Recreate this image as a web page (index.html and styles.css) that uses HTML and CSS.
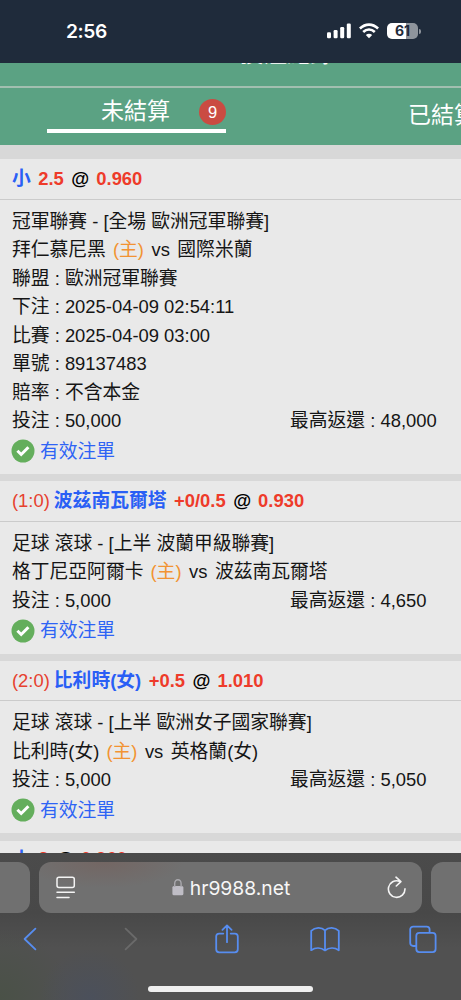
FILE: index.html
```html
<!DOCTYPE html>
<html lang="zh-Hant">
<head>
<meta charset="utf-8">
<meta name="viewport" content="width=device-width, initial-scale=1">
<title>投注紀錄</title>
<link rel="stylesheet" href="styles.css">
</head>
<body>
<div class="phone">
  <header class="status-bar">
    <span class="clock">2:56</span>
    <div class="indicators">
      <svg class="signal" width="24" height="16" viewBox="0 0 24 16" fill="#fff"><rect x="0" y="9.3" width="4" height="6" rx="1.2"/><rect x="6.6" y="7" width="4" height="8.3" rx="1.2"/><rect x="13.2" y="4" width="4" height="11.3" rx="1.2"/><rect x="19.8" y="0.5" width="4" height="14.8" rx="1.2"/></svg>
      <svg class="wifi" width="20" height="16" viewBox="0 0 20 16" fill="none" stroke="#fff" stroke-width="2.6"><path d="M.9 5.5Q5 1.6 10 1.6T19.1 5.5"/><path d="M4.2 9Q6.8 6.5 10 6.5T15.8 9"/><path d="M10 15.2 6.8 12Q10 9.4 13.2 12Z" fill="#fff" stroke="none"/></svg>
      <div class="battery"><span class="battery-body">61</span><span class="battery-cap"></span></div>
    </div>
  </header>
  <div class="title-strip"><span class="page-title">投注紀錄</span></div>
  <nav class="tabs">
    <div class="tab active"><span class="tab-name">未結算</span><span class="badge">9</span></div>
    <div class="tab next">已結算</div>
  </nav>
  <main class="bets">
    <article class="card">
      <h2 class="pick"><b class="team">小</b><b class="odd">2.5</b><b class="at">@</b><b class="odd">0.960</b></h2>
      <div class="detail">
        <p>冠軍聯賽<i> - [</i>全場<i> </i>歐洲冠軍聯賽<i>]</i></p>
        <p>拜仁慕尼黑<span class="home"><i>(</i>主<i>)</i></span><i class="vs">vs</i>國際米蘭</p>
        <p>聯盟<i> : </i>歐洲冠軍聯賽</p>
        <p>下注<i> : 2025-04-09 02:54:11</i></p>
        <p>比賽<i> : 2025-04-09 03:00</i></p>
        <p>單號<i> : 89137483</i></p>
        <p>賠率<i> : </i>不含本金</p>
        <p class="money"><span>投注<i> : 50,000</i></span><span>最高返還<i> : 48,000</i></span></p>
        <p class="state"><svg width="24" height="24" viewBox="0 0 24 24"><circle cx="12" cy="12" r="11.5" fill="#64ae5c"/><path d="m6.4 11.8 3.8 3.7 7.2-7.3" fill="none" stroke="#fff" stroke-width="3"/></svg>有效注單</p>
      </div>
    </article>
    <article class="card">
      <h2 class="pick"><span class="score">(1:0)</span><b class="team">波茲南瓦爾塔</b><b class="odd">+0/0.5</b><b class="at">@</b><b class="odd">0.930</b></h2>
      <div class="detail">
        <p>足球<i> </i>滾球<i> - [</i>上半<i> </i>波蘭甲級聯賽<i>]</i></p>
        <p>格丁尼亞阿爾卡<span class="home"><i>(</i>主<i>)</i></span><i class="vs">vs</i>波茲南瓦爾塔</p>
        <p class="money"><span>投注<i> : 5,000</i></span><span>最高返還<i> : 4,650</i></span></p>
        <p class="state"><svg width="24" height="24" viewBox="0 0 24 24"><circle cx="12" cy="12" r="11.5" fill="#64ae5c"/><path d="m6.4 11.8 3.8 3.7 7.2-7.3" fill="none" stroke="#fff" stroke-width="3"/></svg>有效注單</p>
      </div>
    </article>
    <article class="card">
      <h2 class="pick"><span class="score">(2:0)</span><b class="team">比利時<i>(</i>女<i>)</i></b><b class="odd">+0.5</b><b class="at">@</b><b class="odd">1.010</b></h2>
      <div class="detail">
        <p>足球<i> </i>滾球<i> - [</i>上半<i> </i>歐洲女子國家聯賽<i>]</i></p>
        <p>比利時<i>(</i>女<i>)</i><span class="home"><i>(</i>主<i>)</i></span><i class="vs">vs</i>英格蘭<i>(</i>女<i>)</i></p>
        <p class="money"><span>投注<i> : 5,000</i></span><span>最高返還<i> : 5,050</i></span></p>
        <p class="state"><svg width="24" height="24" viewBox="0 0 24 24"><circle cx="12" cy="12" r="11.5" fill="#64ae5c"/><path d="m6.4 11.8 3.8 3.7 7.2-7.3" fill="none" stroke="#fff" stroke-width="3"/></svg>有效注單</p>
      </div>
    </article>
    <article class="card peek">
      <h2 class="pick"><b class="team">小</b><b class="odd">3</b><b class="at">@</b><b class="odd">0.960</b></h2>
    </article>
  </main>
  <footer class="browser">
    <div class="addresses">
      <div class="address side"></div>
      <div class="address current">
        <svg class="reader" width="20" height="23" viewBox="0 0 20 23" fill="none" stroke="#f4f4f4" stroke-width="1.5" stroke-linecap="round"><rect x="1" y="1.2" width="17.3" height="10.2" rx="2"/><path d="M1 16.3h17.3M1 21.4h12"/></svg>
        <span class="host"><svg width="12" height="17" viewBox="0 0 12 17"><rect x=".4" y="7" width="11" height="9.2" rx="1.5" fill="#bfbdc5"/><path d="M2.7 8V4.5a3.2 3.8 0 0 1 6.4 0V8" fill="none" stroke="#aaa9ae" stroke-width="1.4"/></svg>hr9988.net</span>
        <svg class="reload" width="20" height="23" viewBox="0 0 20 23" fill="none" stroke="#f4f4f4" stroke-width="1.6" stroke-linecap="round" stroke-linejoin="round"><path d="M12.4 5.2A8.3 8.3 0 1 0 18 12.9M9 1.2l4.9 4.4L9.3 10"/></svg>
      </div>
      <div class="address side"></div>
    </div>
    <div class="tools">
      <svg class="back" width="14" height="30" viewBox="0 0 14 30"><path d="M12.4 4.6 1.6 15l10.8 10.4"/></svg>
      <svg class="forward" width="14" height="30" viewBox="0 0 14 30"><path d="M1.6 4.6 12.4 15 1.6 25.4"/></svg>
      <svg class="share" width="24" height="30" viewBox="0 0 24 30"><path d="M8.3 9.6H4.2a3 3 0 0 0-3 3v12.7a3 3 0 0 0 3 3h15.6a3 3 0 0 0 3-3V12.6a3 3 0 0 0-3-3h-4.1M12 18.2V1.5M7.4 5.9 12 1.4l4.6 4.5"/></svg>
      <svg class="book" width="30" height="30" viewBox="0 0 30 30"><path d="M15 6.4C11.5 2.8 5 3 1.2 6.8v19.4C5.4 23.4 11 23.6 15 26.4c4-2.8 9.6-3 13.8-.2V6.8C25 3 18.500 2.800 15 6.400Zm0 0v19.8"/></svg>
      <svg class="stack" width="28" height="30" viewBox="0 0 28 30"><path d="M6.5 22H4.2a3 3 0 0 1-3-3V5.600a3 3 0 0 1 3-3h13.400a3 3 0 0 1 3 3v2.600"/><rect x="7.3" y="8.8" width="19.3" height="19.3" rx="3"/></svg>
    </div>
    <div class="home-bar"></div>
  </footer>
</div>
</body>
</html>
```
FILE: styles.css
```css
* { box-sizing: border-box; }

body {
  margin: 0;
  font-family: "Liberation Sans", "Noto Sans CJK TC", sans-serif;
}

.phone {
  display: flex;
  flex-direction: column;
  width: 461px;
  height: 1000px;
  overflow: hidden;
  background: #d8d8d8;
}

.status-bar {
  flex: none;
  display: flex;
  justify-content: space-between;
  height: 63px;
  padding: 20px 40px 0 66px;
  background: #1f2b3b;
  color: #fff;
}

.clock {
  font: 600 19.2px/23px Inter, sans-serif;
  letter-spacing: -0.4px;
}

.indicators {
  display: flex;
  align-items: flex-start;
  padding-top: 3px;
}

.wifi { margin-left: 8px; }
.battery { display: flex; align-items: center; margin-left: 8px; }

.battery-body {
  width: 31px;
  height: 16px;
  border-radius: 5px;
  background: linear-gradient(90deg, #fff 61%, #8e949c 61%);
  color: #1f2b3b;
  font: 700 14px/16px Inter, sans-serif;
  text-align: center;
}

.battery-cap {
  width: 2px;
  height: 5px;
  margin-left: 1px;
  border-radius: 0 2px 2px 0;
  background: #8e949c;
}

.title-strip {
  flex: none;
  display: flex;
  align-items: flex-start;
  height: 25px;
  padding-left: 240px;
  overflow: hidden;
  border-bottom: 2px solid #a2bfb0;
  background: #5ba283;
}

.page-title {
  margin-top: -26px;
  color: #fff;
  font-size: 23.5px;
  line-height: 34px;
}

.tabs {
  flex: none;
  display: flex;
  height: 57px;
  background: #5ba283;
  color: #fff;
  font-size: 23px;
  white-space: nowrap;
}

.tab.active {
  flex: none;
  display: flex;
  width: 179px;
  height: 45px;
  margin-left: 47px;
  padding-left: 54px;
  border-bottom: 4px solid #fff;
}

.tab-name { line-height: 46px; }

.badge {
  width: 27px;
  height: 26px;
  margin: 11px 0 0 auto;
  border-radius: 50%;
  background: #ca4b42;
  font-size: 16.5px;
  line-height: 26px;
  text-align: center;
}

.tab.next {
  flex: none;
  margin-left: 182px;
  line-height: 54px;
}

.bets {
  flex: none;
  display: flex;
  flex-direction: column;
  gap: 7.2px;
  height: 708px;
  padding-top: 14px;
  overflow: hidden;
}

.card { flex: none; background: #e9e9e9; }

.pick {
  display: flex;
  height: 40.5px;
  margin: 0;
  padding-left: 12px;
  border-bottom: 1px solid #cbcbcb;
  font-size: 18.4px;
  font-weight: 400;
  line-height: 39px;
  white-space: nowrap;
}

.team { color: #2a5ff5; font-size: 18.8px; }
.odd { margin-left: 7.5px; color: #ee3b2a; }
.at { margin-left: 7.5px; color: #000; }
.at + .odd { margin-left: 7px; }
.score { margin-right: 4px; color: #e6412f; }

.detail {
  padding: 8px 0 7.5px 12px;
  color: #151515;
  font-size: 18.8px;
}

.detail p {
  height: 28.5px;
  margin: 0;
  line-height: 28.5px;
  white-space: pre;
}

.detail i, .team i {
  font-size: 18.4px;
  font-style: normal;
}

.home { margin-left: 7px; color: #f29332; }
.detail .vs { margin: 0 7.5px; }

.money { display: grid; grid-template-columns: 278px 1fr; }

.detail .state {
  display: flex;
  align-items: center;
  gap: 5px;
  height: 31px;
  color: #2e63f5;
  line-height: 31px;
}

.state svg { margin-left: -1px; }

.peek { height: 40px; }
.peek .pick { line-height: 35px; }
.peek .team { line-height: 38px; }

.browser {
  flex: none;
  height: 147px;
  padding-top: 9px;
  background:
    radial-gradient(circle at 90px 145px, #4b505b 0, transparent 50px),
    radial-gradient(circle at 0 145px, #4a5147 0, transparent 70px),
    linear-gradient(#4b4b4b 0, #484848 60px, #515151 95px);
}

.addresses {
  display: grid;
  grid-template-columns: 30px 383px 30px;
  gap: 9px;
  height: 51px;
}

.address { border-radius: 12px; background: #707070; }
.side:first-child { border-radius: 0 12px 12px 0; }
.side:last-child { border-radius: 12px 0 0 12px; }

.current {
  display: flex;
  justify-content: space-between;
  align-items: center;
  padding: 0 15px 0 17px;
  background: radial-gradient(ellipse 80px 26px at 65px 0, #736663, #707070);
}

.host {
  display: flex;
  align-items: center;
  gap: 6px;
  margin-left: -1px;
  color: #f7f7f7;
  font: 400 19.3px/26px Inter, sans-serif;
}

.tools {
  display: flex;
  height: 30px;
  margin-top: 11px;
  padding-left: 23px;
  fill: none;
  stroke: #578df0;
  stroke-width: 1.8;
  stroke-linecap: round;
  stroke-linejoin: round;
}

.forward { margin-left: 87px; stroke: #6a6a6a; }
.share { margin-left: 77px; }
.book { margin-left: 71px; }
.stack { margin-left: 69px; }

.home-bar {
  width: 165px;
  height: 5.5px;
  margin: 32px 0 0 148px;
  border-radius: 3px;
  background: #efefef;
}
```
